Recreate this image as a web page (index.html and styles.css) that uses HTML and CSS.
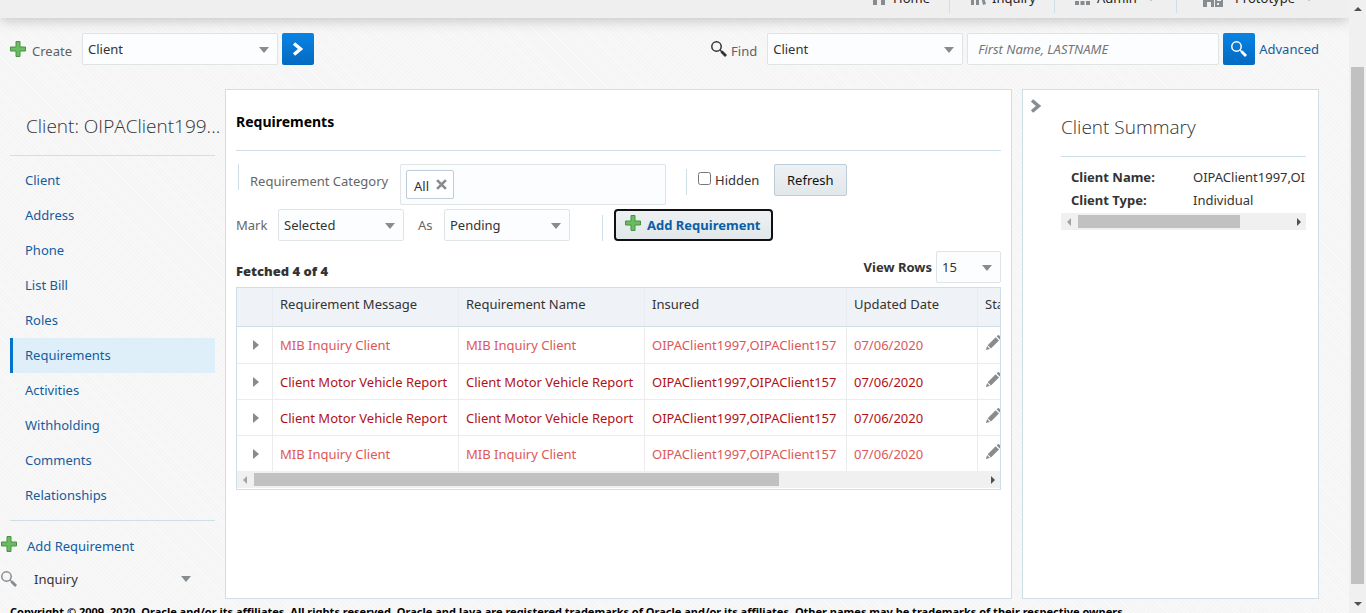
FILE: index.html
```html
<!DOCTYPE html>
<html lang="en">
<head>
<meta charset="utf-8">
<title>Requirements</title>
<link rel="stylesheet" href="styles.css">
</head>
<body>
<svg class="sprite" aria-hidden="true">
  <symbol id="plus" viewBox="0 0 16 16"><path d="M6 .5h4v5.500h5.500v4H10v5.500H6V10H.5V6H6z" fill="#6dbb60" stroke="#459441"/></symbol>
  <symbol id="lens" viewBox="0 0 16 16"><circle cx="5.500" cy="5.500" r="4.700" fill="none" stroke="currentColor" stroke-width="1.500"/><path d="M9 9l2 2" stroke="currentColor" stroke-width="1.500"/><path d="M10.500 10.500l4.500 4.500" stroke="currentColor" stroke-width="2.800"/></symbol>
  <symbol id="chevron" viewBox="0 0 12 16"><path d="M2 2.500L8.500 8L2 13.500" fill="none" stroke="currentColor" stroke-width="3.500"/></symbol>
  <symbol id="pencil" viewBox="0 0 18 18"><path d="M1 17l1.300-4.500 3.200 3.200z M3 11.500L12 2.500l3.700 3.700-9 9z M13 1.500l1-1q1-.8 2 0l1.500 1.500q1 1 0 2l-1 1z"/></symbol>
</svg>
<div class="app">
  <div class="page">
    <nav class="topnav">
      <a href="#" class="nav-item nav-home"><svg viewBox="0 0 16 16"><path d="M8 0L0 8h2v7h4v-5h4v5h4V8h2z"/></svg>Home</a>
      <a href="#" class="nav-item nav-inquiry"><svg viewBox="0 0 16 16"><path d="M1 2h3v13H1zM6 1h3v14H6zM10 2l2-1 4 13-3 1z"/></svg>Inquiry</a>
      <a href="#" class="nav-item nav-admin"><svg viewBox="0 0 16 16"><path d="M0 1h4v4H0zM5.500 1h4v4h-4zM11 1h4v4h-4zM0 6h4v4H0zM5.500 6h4v4h-4zM11 6h4v4h-4zM0 11h4v4H0zM5.500 11h4v4h-4zM11 11h4v4h-4z"/></svg>Admin<i class="nav-caret"></i></a>
      <a href="#" class="nav-item nav-proto"><svg class="wide" viewBox="0 0 20 20"><path fill-rule="evenodd" d="M0 3h11v16H8v-5H4v5H0zM3 9v3h2V9zM6 9v3h2V9zM12 8h8v11h-8zM14 10v3h4v-3zM14 15v2h2v-2z"/></svg>Prototype<i class="nav-caret"></i></a>
    </nav>
    <div class="toolbar">
      <form class="tool-group">
        <svg class="icon icon-plus"><use href="#plus"/></svg>
        <label class="tool-label" for="create">Create</label>
        <span class="select wide-select"><select id="create"><option>Client</option></select></span>
        <button type="button" class="go" aria-label="Go"><svg class="go-chevron"><use href="#chevron"/></svg></button>
      </form>
      <form class="tool-group">
        <svg class="icon icon-find"><use href="#lens"/></svg>
        <label class="tool-label" for="find">Find</label>
        <span class="select wide-select"><select id="find"><option>Client</option></select></span>
        <input class="search" type="text" placeholder="First Name, LASTNAME" aria-label="Name">
        <button type="button" class="go" aria-label="Search"><svg class="icon"><use href="#lens"/></svg></button>
        <a class="advanced" href="#">Advanced</a>
      </form>
    </div>
    <main class="main">
      <aside class="sidebar">
        <h2 class="side-title">Client: OIPAClient199...</h2>
        <ul class="side-nav">
          <li><a href="#">Client</a></li>
          <li><a href="#">Address</a></li>
          <li><a href="#">Phone</a></li>
          <li><a href="#">List Bill</a></li>
          <li><a href="#">Roles</a></li>
          <li><a href="#" class="active" aria-current="page">Requirements</a></li>
          <li><a href="#">Activities</a></li>
          <li><a href="#">Withholding</a></li>
          <li><a href="#">Comments</a></li>
          <li><a href="#">Relationships</a></li>
        </ul>
        <a href="#" class="side-action add"><svg class="icon"><use href="#plus"/></svg>Add Requirement</a>
        <button type="button" class="side-action inquiry"><svg class="icon"><use href="#lens"/></svg>Inquiry<i class="caret"></i></button>
      </aside>
      <section class="panel">
        <h1 class="panel-title">Requirements</h1>
        <div class="filters">
          <i class="divider first"></i>
          <span class="filter-label category-label">Requirement Category</span>
          <div class="combo"><span class="tag">All<button type="button" aria-label="Remove All"><svg viewBox="0 0 10 10"><path d="M1 1l8 8M9 1l-8 8" stroke="#878c90" stroke-width="2.400"/></svg></button></span></div>
          <i class="divider after-combo"></i>
          <label class="check"><input type="checkbox">Hidden</label>
          <button type="button" class="btn">Refresh</button>
        </div>
        <div class="marks">
          <label class="filter-label mark-label" for="mark">Mark</label>
          <span class="select"><select id="mark"><option>Selected</option></select></span>
          <label class="filter-label as-label" for="as">As</label>
          <span class="select"><select id="as"><option>Pending</option></select></span>
          <i class="divider after-as"></i>
          <button type="button" class="btn btn-add"><svg class="icon"><use href="#plus"/></svg>Add Requirement</button>
        </div>
        <div class="summary-row">
          <strong>Fetched 4 of 4</strong>
          <span class="view"><label for="rows">View Rows</label><span class="select small-select"><select id="rows"><option>15</option></select></span></span>
        </div>
        <div class="grid">
          <div class="grid-view">
            <table>
              <colgroup><col class="c-toggle"><col class="c-text"><col class="c-text"><col class="c-insured"><col class="c-date"><col class="c-status"></colgroup>
              <thead><tr><th></th><th>Requirement Message</th><th>Requirement Name</th><th>Insured</th><th>Updated Date</th><th>Status</th></tr></thead>
              <tbody>
                <tr class="light"><td><button type="button" class="expand" aria-label="Expand"></button></td><td>MIB Inquiry Client</td><td>MIB Inquiry Client</td><td>OIPAClient1997,OIPAClient157</td><td>07/06/2020</td><td><svg class="pencil"><use href="#pencil"/></svg></td></tr>
                <tr><td><button type="button" class="expand" aria-label="Expand"></button></td><td>Client Motor Vehicle Report</td><td>Client Motor Vehicle Report</td><td>OIPAClient1997,OIPAClient157</td><td>07/06/2020</td><td><svg class="pencil"><use href="#pencil"/></svg></td></tr>
                <tr><td><button type="button" class="expand" aria-label="Expand"></button></td><td>Client Motor Vehicle Report</td><td>Client Motor Vehicle Report</td><td>OIPAClient1997,OIPAClient157</td><td>07/06/2020</td><td><svg class="pencil"><use href="#pencil"/></svg></td></tr>
                <tr class="light"><td><button type="button" class="expand" aria-label="Expand"></button></td><td>MIB Inquiry Client</td><td>MIB Inquiry Client</td><td>OIPAClient1997,OIPAClient157</td><td>07/06/2020</td><td><svg class="pencil"><use href="#pencil"/></svg></td></tr>
              </tbody>
            </table>
          </div>
          <div class="hbar"><i class="arrow left"></i><div class="track"><div class="thumb thumb-grid"></div></div><i class="arrow right"></i></div>
        </div>
      </section>
      <aside class="client">
        <button type="button" class="collapse" aria-label="Collapse"><svg><use href="#chevron"/></svg></button>
        <div class="client-body">
          <h2 class="client-title">Client Summary</h2>
          <dl class="facts">
            <dt>Client Name:</dt><dd>OIPAClient1997,OIPAClient157</dd>
            <dt>Client Type:</dt><dd>Individual</dd>
          </dl>
          <div class="hbar"><i class="arrow left"></i><div class="track"><div class="thumb thumb-client"></div></div><i class="arrow right"></i></div>
        </div>
      </aside>
    </main>
    <footer class="footer">Copyright © 2009, 2020, Oracle and/or its affiliates. All rights reserved. Oracle and Java are registered trademarks of Oracle and/or its affiliates. Other names may be trademarks of their respective owners.</footer>
  </div>
  <div class="vbar"><i class="arrow up"></i><div class="vthumb"></div><i class="arrow down"></i></div>
</div>
</body>
</html>
```
FILE: styles.css
```css
* { box-sizing: border-box; }
body {
  margin: 0;
  font: 13px/20px "Noto Sans", "Open Sans", sans-serif;
  color: #333;
  background: #f7f7f7;
}
a { color: #145c9e; text-decoration: none; }
h1, h2, ul, dl, dd { margin: 0; padding: 0; }
button, input, select { font: inherit; color: inherit; margin: 0; }
button { cursor: pointer; }
svg { flex: none; }
.sprite { display: none; }
.icon { width: 16px; height: 16px; }

.app { display: flex; height: 100vh; overflow: hidden; }
.page {
  flex: 1;
  min-width: 0;
  display: flex;
  flex-direction: column;
  background: repeating-linear-gradient(45deg, #f9f9f9 0 1px, #f5f5f5 1px 3px);
}

/* Top navigation, scrolled mostly out of view */
.topnav {
  flex: none;
  height: 18px;
  display: flex;
  justify-content: flex-end;
  align-items: flex-end;
  padding-right: 22px;
  background: #efefef;
  clip-path: inset(0 0 -20px 0);
  box-shadow: 0 2px 14px rgba(0, 0, 0, .22);
}
.nav-item {
  display: flex;
  align-items: center;
  height: 40px;
  padding-top: 10px;
  margin-bottom: 5px;
  border-left: 1px solid #cfdfe7;
  color: #222;
  white-space: nowrap;
}
.nav-item svg { width: 16px; height: 16px; margin-right: 6px; fill: #878c90; }
.nav-item svg.wide { width: 20px; height: 20px; margin-right: 12px; }
.nav-home { width: 98px; padding-left: 20px; border-left: 0; }
.nav-inquiry { width: 105px; padding-left: 20px; }
.nav-admin { width: 122px; padding-left: 20px; }
.nav-proto { width: 151px; padding-left: 26px; }
.nav-caret { margin-left: 10px; border: 4px solid transparent; border-top: 5px solid #878c90; border-bottom: 0; }

/* Create / find bar */
.toolbar {
  flex: none;
  display: flex;
  justify-content: space-between;
  padding: 15px 30px 24px 10px;
}
.tool-group { display: flex; align-items: center; }
.tool-label { margin: 3px 10px 0 6px; color: #5f6163; }
.icon-find { margin-right: -2px; color: #333; }
.select { position: relative; display: block; width: 126px; height: 32px; }
.select::after {
  content: "";
  position: absolute;
  right: 9px;
  top: 14px;
  border: 5px solid transparent;
  border-top: 6px solid #878c90;
  border-bottom: 0;
  pointer-events: none;
}
.select select {
  appearance: none;
  width: 100%;
  height: 32px;
  padding: 0 20px 0 5px;
  border: 1px solid #dfe4e7;
  border-radius: 2px;
  background: #fcfdfe;
}
.wide-select { width: 196px; }
.small-select { width: 65px; }
.go {
  display: flex;
  align-items: center;
  justify-content: center;
  width: 32px;
  height: 32px;
  margin-left: 4px;
  padding: 0;
  border: 0;
  border-radius: 2px;
  color: #fff;
  background: linear-gradient(#0a83e4, #026ac0);
}
.go-chevron { width: 12px; height: 16px; }
.search {
  width: 252px;
  height: 32px;
  margin-left: 4px;
  padding: 0 10px;
  border: 1px solid #dfe4e7;
  border-radius: 2px;
  background: #fcfdfe;
}
.search::placeholder { color: #757575; font-style: italic; opacity: 1; }
.advanced { margin-left: 4px; }

/* Page columns */
.main {
  flex: 1;
  min-height: 0;
  display: grid;
  grid-template-columns: 215px minmax(0, 1fr) 297px;
  column-gap: 10px;
  padding-right: 30px;
}
.side-title {
  margin-left: 10px;
  padding: 21px 0 13px 16px;
  font-family: "Open Sans", sans-serif;
  font-size: 19px;
  line-height: 32px;
  font-weight: 300;
  white-space: nowrap;
}
.side-nav {
  margin-left: 10px;
  padding: 7px 0;
  list-style: none;
  border: solid #cfdfe7;
  border-width: 1px 0;
}
.side-nav a { display: block; padding: 0 15px; line-height: 35px; }
.side-nav .active { padding-left: 12px; border-left: 3px solid #0572ce; background: #dfeffa; }
.side-action {
  display: flex;
  align-items: center;
  width: 100%;
  padding: 0;
  border: 0;
  background: none;
  line-height: 20px;
}
.add { margin-top: 15px; color: #145c9e; }
.add .icon { margin: 0 10px 4px 1px; }
.inquiry { margin-top: 13px; color: #333; }
.inquiry .icon { margin: 0 17px 0 1px; color: #878c90; }
.caret { margin-left: auto; margin-right: 24px; border: 5px solid transparent; border-top: 6px solid #878c90; border-bottom: 0; }

/* Requirements panel */
.panel, .client { border: 1px solid #cfdfe7; background: #fff; min-width: 0; }
.panel { padding: 0 10px; }
.panel-title {
  padding: 21px 0 18px;
  font-size: 14px;
  line-height: 21px;
  color: #000;
  border-bottom: 1px solid #cfdfe7;
}
.filters { display: flex; align-items: flex-start; padding-top: 13px; }
.filter-label { color: #666; white-space: nowrap; }
.divider { flex: none; width: 1px; height: 26px; background: #cfdfe7; }
.first { margin-left: 2px; }
.category-label { width: 161px; margin-top: 7px; padding-left: 11px; }
.combo {
  width: 266px;
  height: 41px;
  padding: 5px;
  border: 1px solid #dfe4e7;
  border-radius: 2px;
  background: #fcfdfe;
}
.tag {
  display: inline-flex;
  align-items: center;
  width: 48px;
  height: 29px;
  padding: 2px 0 0 7px;
  border: 1px solid #bcccd8;
  border-radius: 2px;
  background: #fff;
}
.tag button { display: flex; padding: 0 0 2px; margin-left: 7px; border: 0; background: none; }
.tag svg { width: 11px; height: 11px; }
.after-combo { margin: 5px 11px 0 20px; }
.check { display: flex; width: 76px; margin-top: 6px; }
.check input { width: 13px; height: 13px; margin: 2px 4px 0 0; }
.btn {
  height: 32px;
  padding: 0 12px;
  border: 1px solid #bcccd8;
  border-radius: 2px;
  color: #111;
  background: linear-gradient(#eef1f3, #e1e7ea);
}
.marks { display: flex; align-items: center; padding-top: 4px; }
.mark-label { width: 42px; }
.as-label { width: 40px; padding-left: 14px; }
.after-as { margin: 5px 11px 0 32px; }
.btn-add {
  display: flex;
  align-items: center;
  padding: 0 10px 0 9px;
  border: 2px solid #111;
  border-radius: 4px;
  color: #0b5ea8;
  font-weight: 700;
}
.btn-add .icon { margin: 0 6px 4px 0; }
.summary-row {
  display: flex;
  align-items: center;
  justify-content: space-between;
  padding: 10px 0 4px;
  font-weight: 700;
}
.summary-row > strong { padding-top: 8px; }
.view { display: flex; align-items: center; gap: 4px; }
.view select { font-weight: 400; }

/* Data grid */
.grid { border: 1px solid #cfdfe7; }
.grid .hbar { margin-bottom: 1px; }
.grid-view { overflow: hidden; }
table { width: 900px; table-layout: fixed; border-collapse: separate; border-spacing: 0; }
.c-toggle { width: 36px; }
.c-text { width: 186px; }
.c-insured { width: 202px; }
.c-date { width: 131px; }
th, td { padding: 0 7px; border-right: 1px solid #ececec; text-align: left; white-space: nowrap; }
th {
  height: 39px;
  padding-bottom: 6px;
  font-weight: 400;
  color: #333;
  background: linear-gradient(#eff2f7, #eff2f7) padding-box;
  border-color: #e9edf2;
  border-bottom: 1px solid #cfdfe7;
}
td { height: 36px; color: #b01116; border-bottom: 1px solid #ececec; }
tbody tr:first-child td { height: 37px; }
tbody tr:last-child td { height: 35px; border-bottom: 0; }
.light td { color: #dd5757; }
.expand {
  display: block;
  width: 0;
  height: 0;
  margin-left: 9px;
  padding: 0;
  background: none;
  border: 5px solid transparent;
  border-left: 6px solid #878c90;
  border-right: 0;
}
.pencil { display: block; width: 16px; height: 16px; margin-bottom: 4px; fill: #878c90; }

/* Scrollbars */
.hbar { display: flex; align-items: center; height: 17px; background: #f0f0f0; }
.track { flex: 1; }
.thumb { height: 13px; background: #c1c1c1; }
.thumb-grid { width: 72%; }
.thumb-client { width: 77%; }
.arrow { flex: none; border: 4px solid transparent; }
.left { margin: 0 7px 0 2px; border-right-color: #a3a3a3; }
.right { margin: 0 1px 0 8px; border-left-color: #505050; }
.vbar {
  flex: none;
  width: 17px;
  display: flex;
  flex-direction: column;
  align-items: center;
  background: #f0f0f0;
}
.vthumb { flex: 1; width: 13px; margin: 56px 0 18px; background: #c1c1c1; }
.up { margin-top: 3px; border-bottom-color: #505050; }
.down { margin-bottom: 3px; border-top-color: #505050; }

/* Client summary */
.client { display: flex; align-items: flex-start; padding-right: 12px; }
.collapse { width: 38px; flex: none; padding: 8px 0 0 7px; border: 0; background: none; color: #878c90; text-align: left; }
.collapse svg { display: block; width: 12px; height: 16px; }
.client-body { flex: 1; min-width: 0; }
.client-title {
  padding: 21px 0 13px;
  font-family: "Open Sans", sans-serif;
  font-size: 19px;
  line-height: 32px;
  font-weight: 300;
  border-bottom: 1px solid #cfdfe7;
}
.facts {
  display: grid;
  grid-template-columns: 122px 1fr;
  padding: 9px 0 1px 10px;
  line-height: 23px;
  white-space: nowrap;
  overflow: hidden;
}
.facts dt { font-weight: 700; }

.footer {
  flex: none;
  height: 14px;
  padding: 3px 10px 0;
  overflow: hidden;
  white-space: nowrap;
  font-size: 11px;
  font-weight: 700;
  line-height: 20px;
  color: #000;
}
```
